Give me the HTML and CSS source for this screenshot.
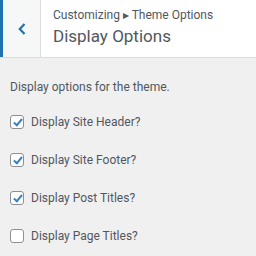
FILE: index.html
```html
<!DOCTYPE html>
<html>
	<head>
		<meta charset="utf-8"/>
		<title>Display Options</title>
		<link rel="stylesheet" href="styles.css">
	</head>
	<body>
		<div class="panel-head">
			<button type="button" class="back" aria-label="Back">
				<svg width="10" height="14" viewBox="0 0 10 14"><path d="M7.5 2 L2.8 7 L7.5 12" fill="none" stroke="#2271b1" stroke-width="2.2"/></svg>
			</button>
			<div class="titles">
				<span class="crumb">Customizing &#9656; Theme Options</span>
				<h3>Display Options</h3>
			</div>
		</div>
		<main>
			<p class="desc">Display options for the theme.</p>
			<label class="opt"><input type="checkbox" checked><span>Display Site Header?</span></label>
			<label class="opt"><input type="checkbox" checked><span>Display Site Footer?</span></label>
			<label class="opt"><input type="checkbox" checked><span>Display Post Titles?</span></label>
			<label class="opt"><input type="checkbox"><span>Display Page Titles?</span></label>
		</main>
	</body>
</html>
```

FILE: styles.css
```css
body {
	margin: 0;
	background: #f0f0f1;
	font-family: Roboto, "Noto Sans", sans-serif;
	color: #50575e;
}
.panel-head {
	display: flex;
	height: 57px;
	background: #fff;
	border-bottom: 1px solid #dcdcde;
}
.back {
	width: 41px;
	border: 0;
	border-left: 3px solid #2271b1;
	border-right: 1px solid #dcdcde;
	background: #f6f7f7;
	padding: 0;
	display: flex;
	align-items: center;
	justify-content: center;
}
.titles {
	padding: 7px 0 0 12px;
}
.crumb {
	display: block;
	font-size: 12px;
	line-height: 16px;
}
h3 {
	margin: 2px 0 0;
	font-size: 17px;
	font-weight: 400;
	line-height: 22px;
}
main {
	padding: 20px 10px 0;
}
.desc {
	margin: 0 0 19px;
	font-size: 12px;
	line-height: 18px;
}
.opt {
	display: flex;
	align-items: center;
	gap: 7px;
	font-size: 12px;
	height: 14px;
	margin-bottom: 24px;
}
.opt:last-child {
	margin-bottom: 0;
}
.opt input {
	appearance: none;
	margin: 0;
	width: 14px;
	height: 14px;
	border: 1px solid #8c8f94;
	border-radius: 3px;
	background: #fff;
	display: grid;
	place-items: center;
}
.opt input:checked::before {
	content: "";
	width: 7px;
	height: 3px;
	border-left: 2px solid #3582c4;
	border-bottom: 2px solid #3582c4;
	transform: translate(0.5px, -1px) rotate(-50deg);
}
```
